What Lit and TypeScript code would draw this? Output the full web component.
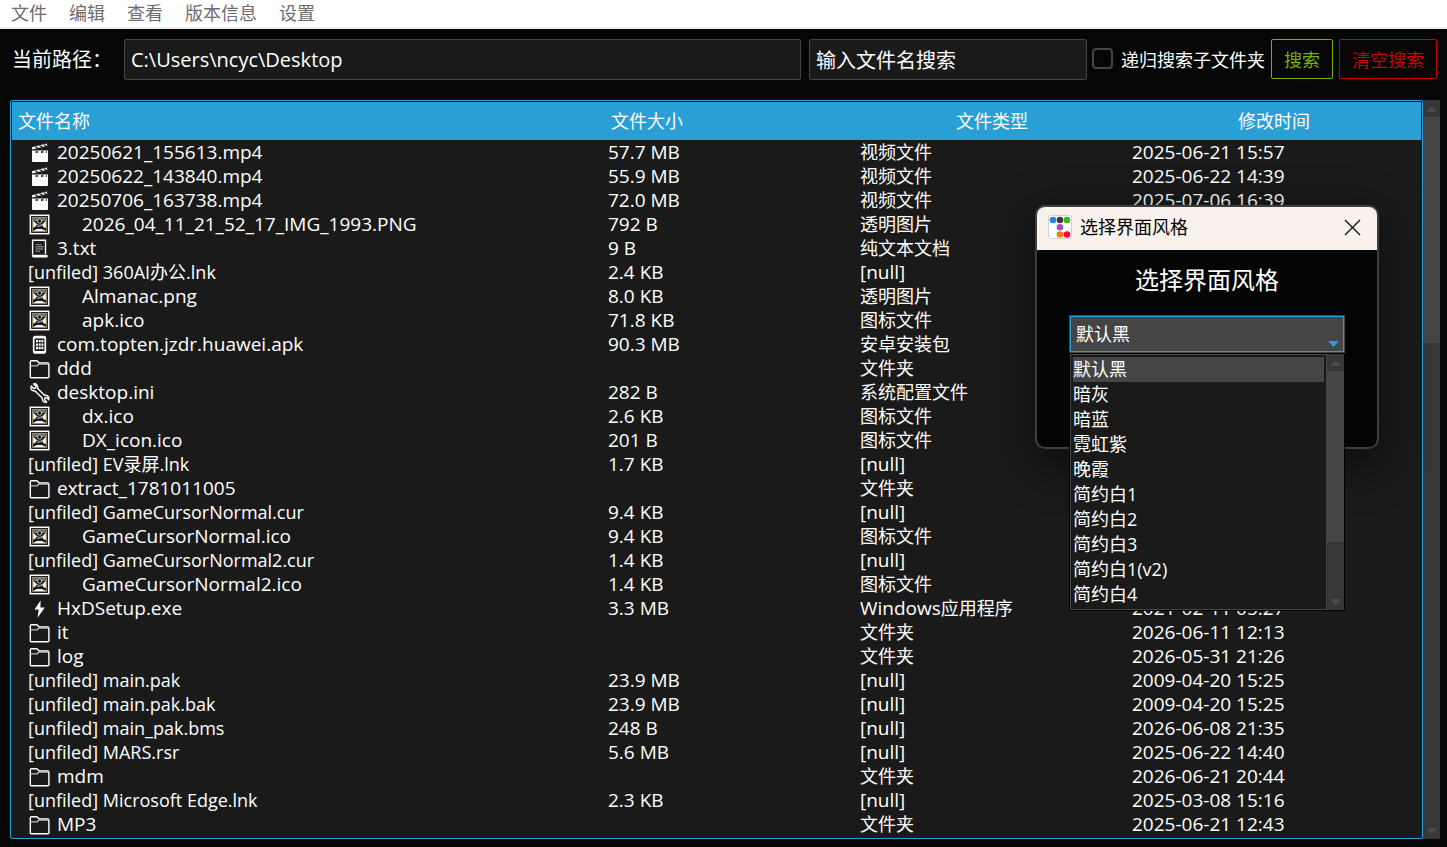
import { LitElement, html, css, svg, TemplateResult } from "lit";
import { customElement, state } from "lit/decorators.js";
import { classMap } from "lit/directives/class-map.js";

type Kind = "video" | "image" | "text" | "phone" | "folder" | "wrench" | "bolt" | "none";

interface FileRow {
  kind: Kind;
  name: string;
  size: string;
  type: string;
  time: string;
}

const row = (kind: Kind, name: string, size: string, type: string, time: string): FileRow => ({ kind, name, size, type, time });

const FILES: FileRow[] = [
  row("video", "20250621_155613.mp4", "57.7 MB", "视频文件", "2025-06-21 15:57"),
  row("video", "20250622_143840.mp4", "55.9 MB", "视频文件", "2025-06-22 14:39"),
  row("video", "20250706_163738.mp4", "72.0 MB", "视频文件", "2025-07-06 16:39"),
  row("image", "2026_04_11_21_52_17_IMG_1993.PNG", "792 B", "透明图片", ""),
  row("text", "3.txt", "9 B", "纯文本文档", ""),
  row("none", "[unfiled] 360AI办公.lnk", "2.4 KB", "[null]", ""),
  row("image", "Almanac.png", "8.0 KB", "透明图片", ""),
  row("image", "apk.ico", "71.8 KB", "图标文件", ""),
  row("phone", "com.topten.jzdr.huawei.apk", "90.3 MB", "安卓安装包", ""),
  row("folder", "ddd", "", "文件夹", ""),
  row("wrench", "desktop.ini", "282 B", "系统配置文件", ""),
  row("image", "dx.ico", "2.6 KB", "图标文件", ""),
  row("image", "DX_icon.ico", "201 B", "图标文件", ""),
  row("none", "[unfiled] EV录屏.lnk", "1.7 KB", "[null]", ""),
  row("folder", "extract_1781011005", "", "文件夹", ""),
  row("none", "[unfiled] GameCursorNormal.cur", "9.4 KB", "[null]", ""),
  row("image", "GameCursorNormal.ico", "9.4 KB", "图标文件", ""),
  row("none", "[unfiled] GameCursorNormal2.cur", "1.4 KB", "[null]", ""),
  row("image", "GameCursorNormal2.ico", "1.4 KB", "图标文件", ""),
  row("bolt", "HxDSetup.exe", "3.3 MB", "Windows应用程序", "2021-02-11 05:27"),
  row("folder", "it", "", "文件夹", "2026-06-11 12:13"),
  row("folder", "log", "", "文件夹", "2026-05-31 21:26"),
  row("none", "[unfiled] main.pak", "23.9 MB", "[null]", "2009-04-20 15:25"),
  row("none", "[unfiled] main.pak.bak", "23.9 MB", "[null]", "2009-04-20 15:25"),
  row("none", "[unfiled] main_pak.bms", "248 B", "[null]", "2026-06-08 21:35"),
  row("none", "[unfiled] MARS.rsr", "5.6 MB", "[null]", "2025-06-22 14:40"),
  row("folder", "mdm", "", "文件夹", "2026-06-21 20:44"),
  row("none", "[unfiled] Microsoft Edge.lnk", "2.3 KB", "[null]", "2025-03-08 15:16"),
  row("folder", "MP3", "", "文件夹", "2025-06-21 12:43"),
];

const STYLES = ["默认黑", "暗灰", "暗蓝", "霓虹紫", "晚霞", "简约白1", "简约白2", "简约白3", "简约白1(v2)", "简约白4"];

const GLYPHS: Record<Exclude<Kind, "none">, TemplateResult> = {
  video: svg`
    <path d="M4 9.500h16v10.500a1 1 0 0 1-1 1H5a1 1 0 0 1-1-1z" fill="#fff"/>
    <path d="M3.800 6.300 18.800 2.600l.6 2.200L4.400 8.500z" fill="#fff"/>
    <path d="m7 5.800 3 1.200M11.500 4.700l3 1.200M15.800 3.700l2.400 1" stroke="#1a1a1a" stroke-width="1.100"/>
    <path d="M7.500 11h2.600M13 11h2.600M18 11h1" stroke="#1a1a1a" stroke-width="1.400"/>`,
  image: svg`
    <rect x="2.300" y="2.300" width="18.400" height="18.400" fill="none" stroke="#fff" stroke-width="1.500"/>
    <rect x="4.600" y="4.600" width="13.800" height="13.800" fill="#1a1a1a" stroke="#a0937a" stroke-width="1"/>
    <path d="M5.200 5.200h12.600v3H5.200z" fill="#777"/>
    <path d="M5.200 7.800 9 11.400 7 14l-1.800.6zM17.800 7.800l-3.800 4.200 2 2.600 1.800.4z" fill="#fff"/>
    <path d="M5.600 18c1.200-1.600 3.200-2.100 5.900-2.100s4.700.5 5.900 2.100z" fill="#fff"/>
    <circle cx="11.500" cy="8" r="2.200" fill="#1a1a1a" stroke="#ddd" stroke-width=".8"/>
    <path d="M8.500 10.600c1.500 2.200 4.500 2.200 6 0M9 13.800l5-1.400" fill="none" stroke="#bbb" stroke-width=".8"/>`,
  text: svg`
    <path d="M4.600 17.500V3.200h12.900V17" fill="none" stroke="#fff" stroke-width="1.400"/>
    <path d="M4.600 17.800h14c1.600 0 1.600 2.800 0 2.800H5.800c-2 0-2.200-2.800-1.200-2.800z" fill="#fff"/>
    <path d="M7.500 7.600h6.500M7.500 9.800h8M7.500 12h7.500M7.500 14.200h4.500" stroke="#777" stroke-width="1.400"/>`,
  phone: svg`
    <rect x="5.700" y="3.500" width="11.600" height="16.500" rx="2" fill="none" stroke="#fff" stroke-width="1.700"/>
    <path d="M5.500 4.500h12M5.500 19h12" stroke="#fff" stroke-width="2.200"/>
    <path d="M8 8.200h7.500M8 11.600h7.500M8 15h7.500" stroke="#fff" stroke-width="2.300" stroke-dasharray="2 .700"/>`,
  folder: svg`
    <path d="M2.300 19.800V5c0-.8.4-1.300 1.200-1.300h5.400l2.200 2.300h8.600c.8 0 1.200.4 1.200 1.200v12.600c0 .6-.3.9-.9.900H3.200c-.6 0-.9-.3-.9-.9z" fill="none" stroke="#fff" stroke-width="1.400" stroke-linejoin="round"/>
    <path d="M2.600 8.800h6.600l1.800-1.600h9.500" fill="none" stroke="#bbb" stroke-width="1.300"/>`,
  wrench: svg`
    <path d="M5.600 3 8 5.300 7.600 7 5.700 7.500 3.200 5.100C2.100 7.500 3.600 10.300 7 10l7.200 7c-.2 3.200 2 4.900 4.500 4L16.500 18.700l.4-1.700 1.700-.4 2.200 2.200c.8-2.600-1-4.800-4.300-4.500L9.700 7.600C10.200 4.200 8 2.200 5.600 3z" fill="#1a1a1a" stroke="#fff" stroke-width="1.400" stroke-linejoin="round"/>`,
  bolt: svg`<path d="M12.600 3.400 6.500 12.600h4.200L9.600 20.800l7.200-10.200h-4.400z" fill="#fff"/>`,
};

/* Han runs are set one pixel smaller than the Latin runs beside them. */
const mixed = (text: string) =>
  text.split(/([\u2e80-\u9fff]+)/).filter(Boolean).map((part) =>
    /[\u2e80-\u9fff]/.test(part) ? html`<span class="han">${part}</span>` : part);

@customElement("scroll-strip")
class ScrollStrip extends LitElement {
  static properties = { share: { type: Number } };
  declare share: number;

  static styles = css`
    :host { display: flex; }
    .track { display: flex; flex-direction: column; width: 17px; background: #373737; }
    .cap { display: flex; align-items: center; justify-content: center; height: 17px; padding: 0; border: 0; background: #373737; }
    .cap svg { display: block; width: 11px; height: 6px; fill: #4a4a4a; }
    .body { display: flex; flex-direction: column; flex: 1; }
    .thumb { background: #454545; }
  `;

  render() {
    return html`<div class="track">
      <button class="cap" aria-label="向上滚动"><svg viewBox="0 0 11 6"><path d="M0 6 5.500 0 11 6z"/></svg></button>
      <div class="body"><div class="thumb" style="height:${this.share}%"></div></div>
      <button class="cap" aria-label="向下滚动"><svg viewBox="0 0 11 6"><path d="M0 0h11L5.500 6z"/></svg></button>
    </div>`;
  }
}

@customElement("style-dialog")
class StyleDialog extends LitElement {
  @state() private picked = 0;

  static styles = css`
    :host { display: block; }
    * { box-sizing: border-box; }
    .window { width: 344px; height: 244px; border: 2px solid #3e3e3e; border-radius: 10px; background: #050505; box-shadow: 0 14px 44px 6px rgba(0, 0, 0, .45); }
    .titlebar { display: flex; align-items: center; gap: 8px; height: 43px; padding: 0 16px 3px 11px; border-radius: 8px 8px 0 0; background: #f9f1ec; color: #000; font-size: 18px; line-height: 24px; }
    .logo { width: 24px; height: 24px; }
    .title { flex: 1; }
    .close { display: flex; padding: 0; border: 0; background: none; }
    .close svg { width: 17px; height: 17px; stroke: #111; stroke-width: 1.4; }
    .content { padding: 12px 32px; }
    .heading { display: block; margin-bottom: 17px; font-size: 24px; line-height: 36px; text-align: center; }
    .field { position: relative; border: 1px solid #454545; }
    .combo { display: block; width: 100%; height: 36px; padding: 0 5px; appearance: none; border: 1px solid #2a9fd6; border-radius: 0; outline: 0; background: #454545; color: #fff; font: inherit; font-size: 18px; }
    .arrow { position: absolute; right: 5px; bottom: 5px; width: 11px; height: 6px; fill: #2a9fd6; pointer-events: none; }
    .popup { position: absolute; top: 37px; left: -1px; right: -1px; display: flex; border: 1px solid #000; background: #1a1a1a; }
    .list { flex: 1; margin: 0; padding: 2px; border: 1px solid #454545; list-style: none; font-size: 18px; line-height: 25px; }
    .item { height: 25px; }
    .item.on { background: #454545; }
  `;

  render() {
    return html`<section class="window" role="dialog" aria-labelledby="caption">
      <header class="titlebar">
        <svg class="logo" viewBox="0 0 24 24" aria-hidden="true">
          <rect x=".5" y=".5" width="23" height="23" rx="2.500" fill="#fff" stroke="#d4d0ce"/>
          <circle cx="5" cy="5" r="3.300" fill="#2a82e8"/><circle cx="12" cy="5" r="3.300" fill="#3a3a3c"/><circle cx="19" cy="5" r="3.300" fill="#3fb618"/>
          <circle cx="12" cy="12.300" r="3.300" fill="#9954bb"/>
          <circle cx="12" cy="19.500" r="3.300" fill="#ff7518"/><circle cx="19" cy="19.500" r="3.300" fill="#ff0039"/>
        </svg>
        <span class="title" id="caption">选择界面风格</span>
        <button class="close" aria-label="关闭"><svg viewBox="0 0 17 17"><path d="m1 1 15 15M16 1 1 16"/></svg></button>
      </header>
      <div class="content">
        <label class="heading" for="style">选择界面风格</label>
        <div class="field">
          <select class="combo" id="style" .selectedIndex=${this.picked} @change=${(e: Event) => (this.picked = (e.target as HTMLSelectElement).selectedIndex)}>
            ${STYLES.map((s) => html`<option>${s}</option>`)}
          </select>
          <svg class="arrow" viewBox="0 0 11 6"><path d="M0 0h11L5.500 6z"/></svg>
          <div class="popup">
            <ul class="list" role="listbox" aria-label="选择界面风格">
              ${STYLES.map((s, i) => html`<li role="option" aria-selected=${i === this.picked} class=${classMap({ item: true, on: i === this.picked })} @click=${() => (this.picked = i)}>${s}</li>`)}
            </ul>
            <scroll-strip .share=${77}></scroll-strip>
          </div>
        </div>
      </div>
    </section>`;
  }
}

@customElement("app-root")
class AppRoot extends LitElement {
  static styles = css`
    :host { position: relative; display: flex; flex-direction: column; height: 100vh; overflow: hidden; background: #060606; color: #fff; font-family: "Open Sans", "Noto Sans CJK SC", sans-serif; font-size: 18px; }
    * { box-sizing: border-box; }
    .menubar { display: flex; gap: 22px; height: 29px; padding: 0 11px 2px; border-bottom: 2px solid #f0f0f0; background: #fff; }
    .menu { padding: 0; border: 0; background: none; color: #6d6d6d; font: inherit; line-height: 24px; }
    .toolbar { display: flex; align-items: flex-start; padding: 10px 10px 20px 12px; }
    .path-label { width: 112px; font-size: 20px; line-height: 41px; }
    .box { min-width: 0; height: 41px; padding: 0 6px; border: 1px solid #454545; border-radius: 2px; outline: 0; background: #1a1a1a; color: #fff; font: inherit; font-size: 20px; }
    .path { flex: 1; margin-right: 8px; }
    .query { width: 278px; margin-right: 5px; }
    .check { display: flex; align-items: center; gap: 8px; height: 39px; margin-right: 6px; }
    .tick { width: 21px; height: 21px; margin: 0; appearance: none; border: 2px solid #454545; border-radius: 4px; background: #060606; }
    .action { height: 40px; padding: 0 12px; border: 1px solid; border-radius: 2px; background: none; font: inherit; }
    .go { margin-right: 6px; color: #77b300; }
    .reset { color: #cc0000; }
    .browser { display: flex; flex: 1; min-height: 0; margin: 0 7px 8px 10px; }
    .frame { flex: 1; min-width: 0; overflow: hidden; padding: 1px; border: 1px solid #2a9fd6; border-radius: 2px; background: #1a1a1a; }
    .files { width: 100%; table-layout: fixed; border-collapse: collapse; line-height: 24px; font-size: 19px; }
    .size { width: 252px; }
    .type { width: 272px; }
    .time { width: 292px; }
    th { height: 38px; padding: 0 2px 0 0; background: #2a9fd6; font-size: 18px; font-weight: 400; text-align: center; }
    .start { padding-left: 6px; text-align: left; }
    td { height: 24px; padding: 0 0 0 3px; white-space: nowrap; }
    .name { display: flex; height: 24px; padding-left: 13px; }
    .name.unfiled { font-size: 18px; }
    .icon { width: 24px; height: 24px; margin-right: 5px; }
    .icon.wide { margin-right: 30px; }
    .han { font-size: 18px; }
    .dialog { position: absolute; top: 205px; right: 68px; }
  `;

  render() {
    return html`
      <nav class="menubar">${["文件", "编辑", "查看", "版本信息", "设置"].map((m) => html`<button class="menu">${m}</button>`)}</nav>
      <div class="toolbar">
        <label class="path-label" for="path">当前路径：</label>
        <input class="box path" id="path" value="C:\\Users\\ncyc\\Desktop">
        <input class="box query" aria-label="输入文件名搜索" value="输入文件名搜索">
        <label class="check"><input class="tick" type="checkbox">递归搜索子文件夹</label>
        <button class="action go">搜索</button>
        <button class="action reset">清空搜索</button>
      </div>
      <main class="browser">
        <div class="frame">
          <table class="files">
            <colgroup><col><col class="size"><col class="type"><col class="time"></colgroup>
            <thead><tr><th class="start">文件名称</th><th class="start">文件大小</th><th>文件类型</th><th>修改时间</th></tr></thead>
            <tbody>${FILES.map((f) => html`<tr>
              <td><div class=${classMap({ name: true, unfiled: f.kind === "none" })}>${f.kind === "none" ? "" : html`<svg class=${classMap({ icon: true, wide: f.kind === "image" })} viewBox="0 -1 24 24" aria-hidden="true">${GLYPHS[f.kind]}</svg>`}<span>${mixed(f.name)}</span></div></td>
              <td>${f.size}</td><td>${mixed(f.type)}</td><td>${f.time}</td>
            </tr>`)}</tbody>
          </table>
        </div>
        <scroll-strip .share=${32}></scroll-strip>
      </main>
      <style-dialog class="dialog"></style-dialog>`;
  }
}
